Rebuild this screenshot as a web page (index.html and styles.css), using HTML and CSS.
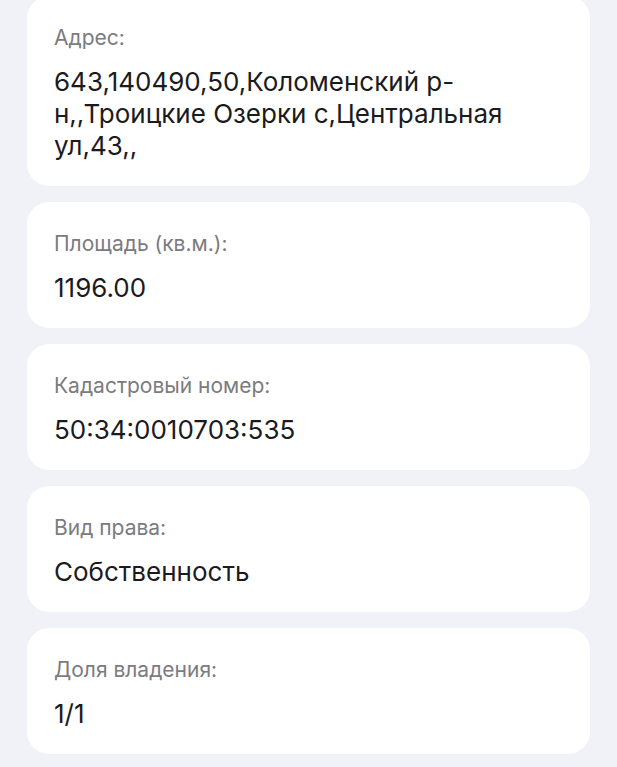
FILE: index.html
```
<!DOCTYPE html>
<html lang="ru">
<head>
    <meta charset="UTF-8">
    <meta name="viewport" content="width=device-width, initial-scale=1.0">
    <title>Объект</title>
    <link rel="stylesheet" href="styles.css">
</head>
<body>
    <div class="list">
        <div class="card">
            <div class="label">Адрес:</div>
            <div class="value">643,140490,50,Коломенский р-н,,Троицкие Озерки с,Центральная ул,43,,</div>
        </div>
        <div class="card">
            <div class="label">Площадь (кв.м.):</div>
            <div class="value">1196.00</div>
        </div>
        <div class="card">
            <div class="label">Кадастровый номер:</div>
            <div class="value">50:34:0010703:535</div>
        </div>
        <div class="card">
            <div class="label">Вид права:</div>
            <div class="value">Собственность</div>
        </div>
        <div class="card">
            <div class="label">Доля владения:</div>
            <div class="value">1/1</div>
        </div>
    </div>
</body>
</html>
```

FILE: styles.css
```
body {
    margin: 0;
    background-color: #f1f2f7;
    font-family: Inter, "Noto Sans", sans-serif;
}
.list {
    display: flex;
    flex-direction: column;
    gap: 16px;
    padding: 0 27px;
    margin-top: -4px;
}
.card {
    background-color: #fff;
    border-radius: 22px;
    padding: 28px 27px 24px;
}
.label {
    font-size: 21px;
    line-height: 28px;
    color: #7b7b80;
}
.value {
    margin-top: 14px;
    font-size: 26px;
    line-height: 32px;
    color: #1b1b1d;
}
```
